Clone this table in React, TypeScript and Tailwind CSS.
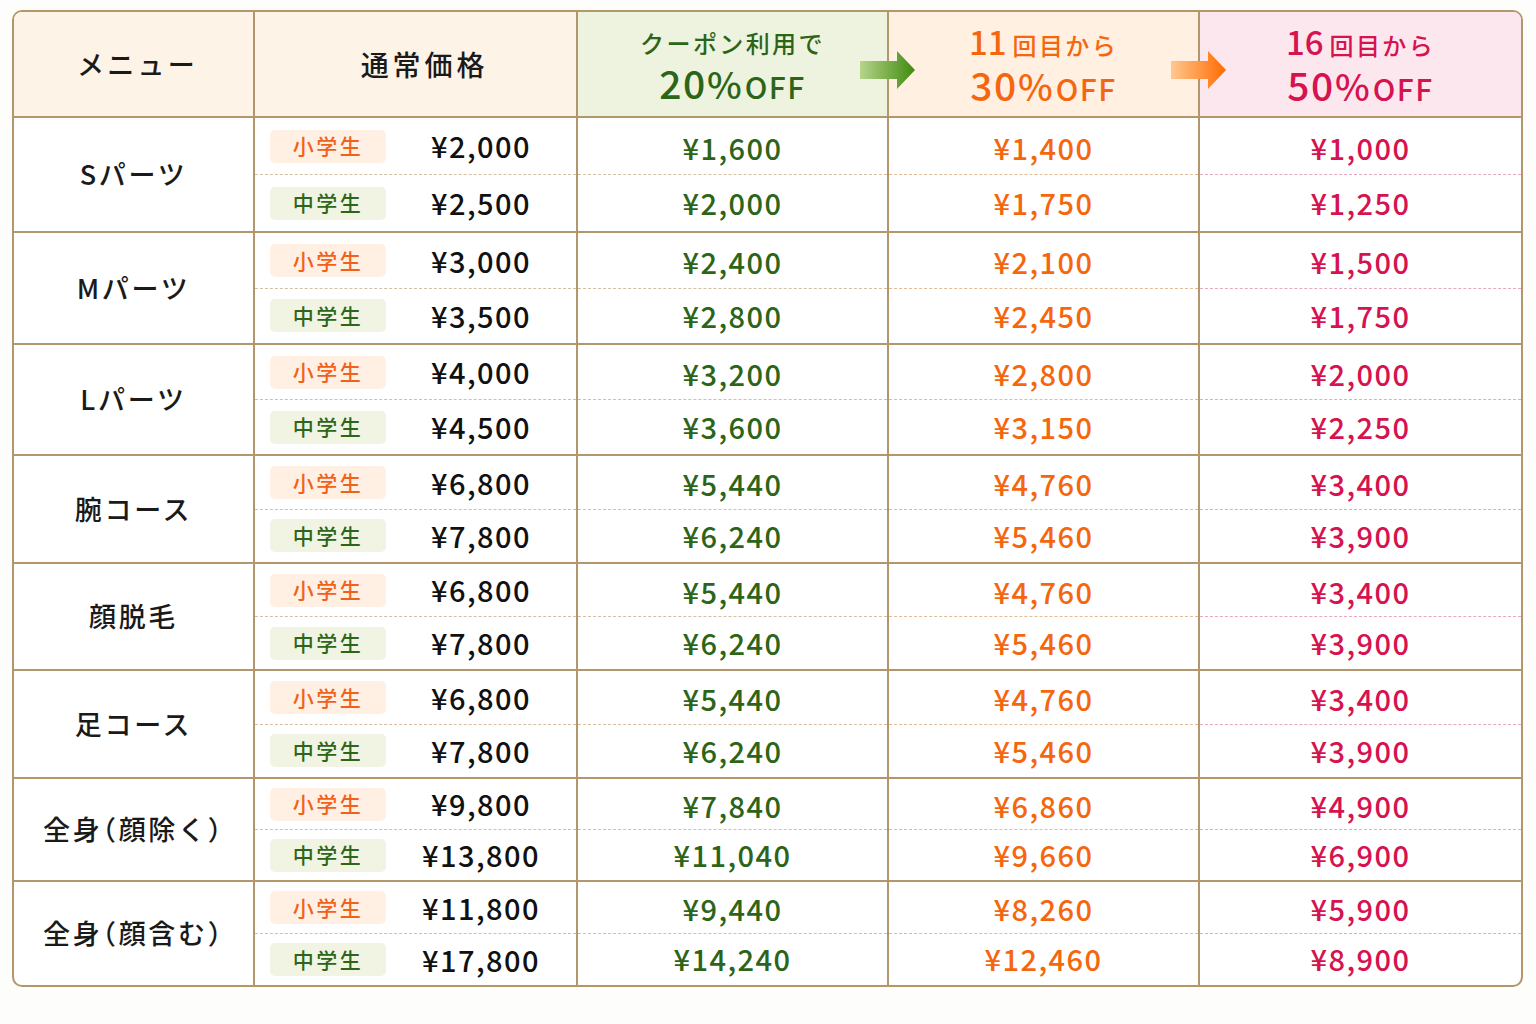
import React from "react";

type Row = {
  menu: string;
  h: string;
  normal: [string, string];
  coupon: [string, string];
  eleven: [string, string];
  sixteen: [string, string];
};

const rows: Row[] = [
  { menu: "Sパーツ", h: "h-[115px]", normal: ["¥2,000", "¥2,500"], coupon: ["¥1,600", "¥2,000"], eleven: ["¥1,400", "¥1,750"], sixteen: ["¥1,000", "¥1,250"] },
  { menu: "Mパーツ", h: "h-[112px]", normal: ["¥3,000", "¥3,500"], coupon: ["¥2,400", "¥2,800"], eleven: ["¥2,100", "¥2,450"], sixteen: ["¥1,500", "¥1,750"] },
  { menu: "Lパーツ", h: "h-[111px]", normal: ["¥4,000", "¥4,500"], coupon: ["¥3,200", "¥3,600"], eleven: ["¥2,800", "¥3,150"], sixteen: ["¥2,000", "¥2,250"] },
  { menu: "腕コース", h: "h-[108px]", normal: ["¥6,800", "¥7,800"], coupon: ["¥5,440", "¥6,240"], eleven: ["¥4,760", "¥5,460"], sixteen: ["¥3,400", "¥3,900"] },
  { menu: "顔脱毛", h: "h-[107px]", normal: ["¥6,800", "¥7,800"], coupon: ["¥5,440", "¥6,240"], eleven: ["¥4,760", "¥5,460"], sixteen: ["¥3,400", "¥3,900"] },
  { menu: "足コース", h: "h-[108px]", normal: ["¥6,800", "¥7,800"], coupon: ["¥5,440", "¥6,240"], eleven: ["¥4,760", "¥5,460"], sixteen: ["¥3,400", "¥3,900"] },
  { menu: "全身（顔除く）", h: "h-[103px]", normal: ["¥9,800", "¥13,800"], coupon: ["¥7,840", "¥11,040"], eleven: ["¥6,860", "¥9,660"], sixteen: ["¥4,900", "¥6,900"] },
  { menu: "全身（顔含む）", h: "h-[103px]", normal: ["¥11,800", "¥17,800"], coupon: ["¥9,440", "¥14,240"], eleven: ["¥8,260", "¥12,460"], sixteen: ["¥5,900", "¥8,900"] },
];

const font = "[font-family:'Noto_Sans_CJK_JP','Noto_Sans',sans-serif]";

function Arrow({ id, from, to }: { id: string; from: string; to: string }) {
  return (
    <svg width="56" height="40" viewBox="0 0 56 40">
      <defs>
        <linearGradient id={id} x1="0" y1="0" x2="1" y2="0">
          <stop offset="0" stopColor={from} />
          <stop offset="1" stopColor={to} />
        </linearGradient>
      </defs>
      <path d="M0 11 H37 V1 L55 20 L37 39 V29 H0 Z" fill={`url(#${id})`} />
    </svg>
  );
}

function Badge({ kind }: { kind: "sho" | "chu" }) {
  const cls =
    kind === "sho"
      ? "bg-[#fff0e3] text-[#f0621a]"
      : "bg-[#f1f4e3] text-[#2d661a]";
  return (
    <div className={`w-[116px] h-[33px] rounded-[5px] flex items-center justify-center text-[21px] font-medium tracking-[0.12em] ${cls}`}>
      {kind === "sho" ? "小学生" : "中学生"}
    </div>
  );
}

function Offer({ top, unit, big }: { top: React.ReactNode; unit?: string; big: string }) {
  return (
    <>
      <div className="flex items-baseline leading-[32px] font-medium mt-[6px]">
        {top}
        {unit && <span className="text-[24px] tracking-[0.1em]">{unit}</span>}
      </div>
      <div className="flex items-baseline leading-[44px] font-medium mt-[1px]">
        <span className="text-[39px] tracking-[0.04em]">{big}</span>
        <span className="text-[37px] mr-[3px]">%</span>
        <span className="text-[30px] tracking-[0.05em]">OFF</span>
      </div>
    </>
  );
}

function PriceCell({
  vals,
  color,
  dash,
  w,
  last,
}: {
  vals: [string, string];
  color: string;
  dash: string;
  w: string;
  last?: boolean;
}) {
  return (
    <div className={`${w} h-full flex flex-col ${last ? "" : "border-r-2 border-[#b4966c]"}`}>
      <div className={`flex-1 flex items-center justify-center text-[29px] font-medium tracking-[0.05em] ${color}`}>
        <span className="mt-[3px]">{vals[0]}</span>
      </div>
      <div className={`border-t border-dashed ${dash}`} />
      <div className={`flex-1 flex items-center justify-center text-[29px] font-medium tracking-[0.05em] ${color}`}>
        <span className="-mt-[1px]">{vals[1]}</span>
      </div>
    </div>
  );
}

export default function App() {
  return (
    <div className={`w-full min-h-[1024px] bg-[#fdfdfc] pt-[10px] pl-[12px] ${font}`}>
      <div className="w-[1511px] border-2 border-[#b4966c] rounded-[10px] overflow-hidden bg-white">
        {/* header */}
        <div className="flex h-[106px] border-b-2 border-[#b4966c]">
          <div className="w-[241px] border-r-2 border-[#b4966c] bg-[#fdf3e6] flex items-center justify-center pl-[8px] text-[27px] font-medium tracking-[0.12em] text-[#1a1a1a]">
            メニュー
          </div>
          <div className="w-[323px] border-r-2 border-[#b4966c] bg-[#fdf3e6] flex items-center justify-center pl-[18px] text-[28px] font-medium tracking-[0.14em] text-[#1a1a1a]">
            通常価格
          </div>
          <div className="relative w-[311px] border-r-2 border-[#b4966c] bg-[#eef3df] flex flex-col items-center justify-center text-[#2c6418]">
            <Offer top={<span className="text-[24px] tracking-[0.1em]">クーポン利用で</span>} big="20" />
            <div className="absolute right-[-29px] top-[38px] z-10">
              <Arrow id="ga" from="#b6d48a" to="#3f8a0f" />
            </div>
          </div>
          <div className="relative w-[311px] border-r-2 border-[#b4966c] bg-[#fff0e2] flex flex-col items-center justify-center text-[#f5670f]">
            <Offer top={<span className="text-[33px] mr-[6px]">11</span>} unit="回目から" big="30" />
            <div className="absolute right-[-29px] top-[38px] z-10">
              <Arrow id="oa" from="#ffc890" to="#ff6a00" />
            </div>
          </div>
          <div className="w-[321px] bg-[#fde7ef] flex flex-col items-center justify-center text-[#d6124f]">
            <Offer top={<span className="text-[33px] mr-[6px]">16</span>} unit="回目から" big="50" />
          </div>
        </div>

        {/* body */}
        {rows.map((r, i) => (
          <div
            key={r.menu}
            className={`flex ${r.h} ${i < rows.length - 1 ? "border-b-2 border-[#b4966c]" : ""}`}
          >
            <div className="w-[241px] border-r-2 border-[#b4966c] flex items-center justify-center text-[27px] font-medium tracking-[0.1em] text-[#1a1a1a] [font-feature-settings:'halt']">
              {r.menu}
            </div>
            <div className="w-[323px] h-full flex flex-col border-r-2 border-[#b4966c]">
              <div className="flex-1 flex items-center pl-[15px]">
                <Badge kind="sho" />
                <div className="flex-1 text-center text-[29px] font-medium tracking-[0.05em] text-[#111]">{r.normal[0]}</div>
              </div>
              <div className="border-t border-dashed border-[#d5bfa2]" />
              <div className="flex-1 flex items-center pl-[15px]">
                <Badge kind="chu" />
                <div className="flex-1 text-center text-[29px] font-medium tracking-[0.05em] text-[#111]">{r.normal[1]}</div>
              </div>
            </div>
            <PriceCell vals={r.coupon} color="text-[#2c6418]" dash="border-[#d5bfa2]" w="w-[311px]" />
            <PriceCell vals={r.eleven} color="text-[#f5670f]" dash="border-[#e3bc96]" w="w-[311px]" />
            <PriceCell vals={r.sixteen} color="text-[#d6124f]" dash="border-[#e6a9bf]" w="w-[321px]" last />
          </div>
        ))}
      </div>
    </div>
  );
}
